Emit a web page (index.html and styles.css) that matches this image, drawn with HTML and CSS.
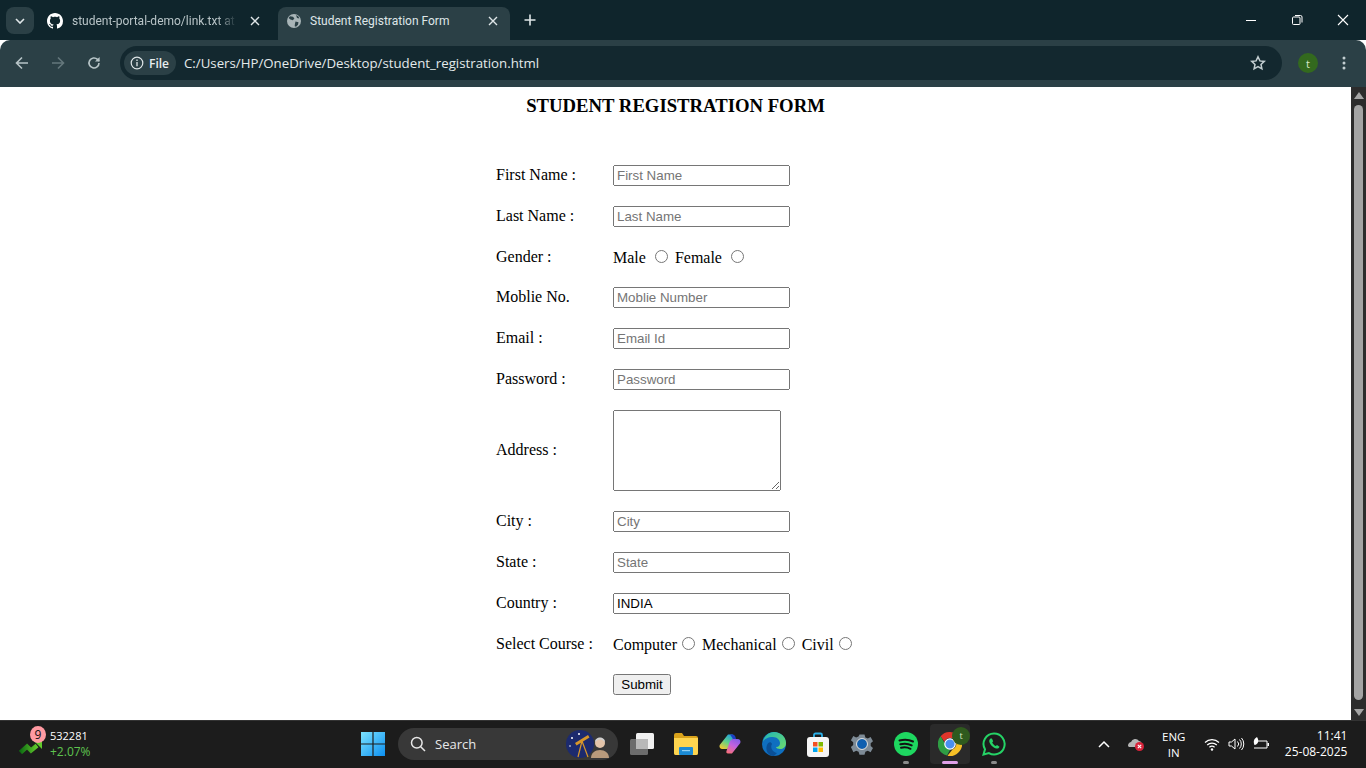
FILE: index.html
```html
<!DOCTYPE html>
<html lang="en">
  <head>
    <meta charset="UTF-8" />
    <title>Student Registration Form</title>
    <link rel="stylesheet" href="styles.css">
  </head>
  <body>
    <div class="tabstrip">
      <button class="tab-search" aria-label="Search tabs">
        <svg width="10" height="6" viewBox="0 0 10 6"><path d="M1 1l4 4 4-4" fill="none" stroke="#dfe6e8" stroke-width="1.6"/></svg>
      </button>
      <div class="tab">
        <svg class="tab-icon" width="16" height="16" viewBox="0 0 16 16"><path fill="#fff" d="M8 0C3.58 0 0 3.58 0 8c0 3.54 2.29 6.53 5.47 7.59.4.07.55-.17.55-.38 0-.19-.01-.82-.01-1.49-2.01.37-2.53-.49-2.69-.94-.09-.23-.48-.94-.82-1.13-.28-.15-.68-.52-.01-.53.63-.01 1.08.58 1.23.82.72 1.21 1.87.87 2.33.66.07-.52.28-.87.51-1.07-1.78-.2-3.64-.89-3.64-3.95 0-.87.31-1.59.82-2.15-.08-.2-.36-1.02.08-2.12 0 0 .67-.21 2.2.82.64-.18 1.32-.27 2-.27s1.36.09 2 .27c1.53-1.04 2.2-.82 2.2-.82.44 1.1.16 1.92.08 2.12.51.56.82 1.27.82 2.15 0 3.07-1.87 3.75-3.65 3.95.29.25.54.73.54 1.48 0 1.07-.01 1.93-.01 2.2 0 .21.15.46.55.38A8.01 8.01 0 0 0 16 8c0-4.42-3.58-8-8-8z"/></svg>
        <span class="tab-title tab-title-fade">student-portal-demo/link.txt at</span>
        <svg class="tab-close" width="10" height="10" viewBox="0 0 10 10"><path d="M1 1l8 8M9 1l-8 8" stroke="#dfe6e8" stroke-width="1.4"/></svg>
      </div>
      <div class="tab tab-active">
        <svg class="tab-icon" width="16" height="16" viewBox="0 0 16 16"><circle cx="8" cy="8" r="7" fill="#a9b5b8"/><path fill="#2b4046" d="M4 3.2l3 .6 1.4 1.6-1.6 1.8-2.3-.6L2.600 5zM9.500 8.400l3 .8-.5 2.600-2 2-1.300-.5.2-2.400zM10 2l2.500 1.500.8 2-2.300-.5z"/></svg>
        <span class="tab-title">Student Registration Form</span>
        <svg class="tab-close" width="10" height="10" viewBox="0 0 10 10"><path d="M1 1l8 8M9 1l-8 8" stroke="#dfe6e8" stroke-width="1.4"/></svg>
      </div>
      <svg class="new-tab" width="12" height="12" viewBox="0 0 12 12"><path d="M6 .5v11M.5 6h11" stroke="#dfe6e8" stroke-width="1.6"/></svg>
      <div class="window-btns">
        <svg width="12" height="12" viewBox="0 0 12 12"><path d="M1 6.500h10" stroke="#fff"/></svg>
        <svg width="12" height="12" viewBox="0 0 12 12"><rect x="1.500" y="3" width="7.500" height="7.500" rx="1" fill="none" stroke="#fff"/><path d="M4 1.500h5.500a1.500 1.500 0 0 1 1.500 1.500v5.500" fill="none" stroke="#fff"/></svg>
        <svg width="12" height="12" viewBox="0 0 12 12"><path d="M1 1l10 10M11 1L1 11" stroke="#fff" stroke-width="1.100"/></svg>
      </div>
    </div>

    <div class="toolbar">
      <svg class="nav-icon" width="14" height="14" viewBox="0 0 14 14"><path d="M13 7H2M7 1.500 1.500 7 7 12.500" fill="none" stroke="#b7c4c7" stroke-width="1.600"/></svg>
      <svg class="nav-icon" width="14" height="14" viewBox="0 0 14 14"><path d="M1 7h11M7 1.500 12.500 7 7 12.500" fill="none" stroke="#64777c" stroke-width="1.600"/></svg>
      <svg class="nav-icon" width="14" height="14" viewBox="0 0 14 14"><path d="M12 7a5 5 0 1 1-1.500-3.600L12 5" fill="none" stroke="#b7c4c7" stroke-width="1.600"/><path d="M12.600 1v4.600H8z" fill="#b7c4c7"/></svg>
      <div class="omnibox">
        <div class="site-chip">
          <svg width="14" height="14" viewBox="0 0 14 14"><circle cx="7" cy="7" r="5.800" fill="none" stroke="#dfe6e8" stroke-width="1.200"/><path d="M7 6v4.200M7 3.600v1.300" stroke="#dfe6e8" stroke-width="1.300"/></svg>
          <span>File</span>
        </div>
        <span class="url">C:/Users/HP/OneDrive/Desktop/student_registration.html</span>
        <svg class="star" width="16" height="16" viewBox="0 0 16 16"><path d="M8 1.800l1.900 4.100 4.400.5-3.300 3 .9 4.400L8 11.600l-3.900 2.200.9-4.400-3.300-3 4.400-.5z" fill="none" stroke="#c3ced1" stroke-width="1.500"/></svg>
      </div>
      <div class="avatar">t</div>
      <svg class="menu-dots" width="4" height="14" viewBox="0 0 4 14"><circle cx="2" cy="2" r="1.500" fill="#c3ced1"/><circle cx="2" cy="7" r="1.500" fill="#c3ced1"/><circle cx="2" cy="12" r="1.500" fill="#c3ced1"/></svg>
    </div>

    <div class="viewport">
      <main class="page">
        <h3 class="form-title">STUDENT REGISTRATION FORM</h3>
        <form class="reg-form">
          <label>First Name :</label>
          <input type="text" placeholder="First Name">
          <label>Last Name :</label>
          <input type="text" placeholder="Last Name">
          <label>Gender :</label>
          <div class="choices">Male <input type="radio" name="gender"> Female <input type="radio" name="gender"></div>
          <label>Moblie No.</label>
          <input type="text" placeholder="Moblie Number">
          <label>Email :</label>
          <input type="text" placeholder="Email Id">
          <label>Password :</label>
          <input type="password" placeholder="Password">
          <label>Address :</label>
          <textarea cols="20" rows="5"></textarea>
          <label>City :</label>
          <input type="text" placeholder="City">
          <label>State :</label>
          <input type="text" placeholder="State">
          <label>Country :</label>
          <input type="text" value="INDIA">
          <label>Select Course :</label>
          <div class="choices">Computer<input type="radio" name="course"> Mechanical<input type="radio" name="course"> Civil<input type="radio" name="course"></div>
          <span></span>
          <div><input type="submit" value="Submit"></div>
        </form>
      </main>
      <div class="scrollbar">
        <span class="arrow-up"></span>
        <span class="thumb"></span>
        <span class="arrow-down"></span>
      </div>
    </div>

    <div class="taskbar">
      <div class="stock">
        <div class="stock-icon">
          <svg width="24" height="14" viewBox="0 0 24 14"><defs><linearGradient id="stk" x1="0" y1="0" x2="1" y2="0"><stop offset="0" stop-color="#0f6e12"/><stop offset="1" stop-color="#62c92c"/></linearGradient></defs><path d="M1.500 12.500 8 6.500l4 4 6-5" fill="none" stroke="url(#stk)" stroke-width="4.500"/><path d="M15 1h8v8z" fill="#62c92c"/></svg>
          <span class="stock-badge">9</span>
        </div>
        <div class="stock-text">
          <span>532281</span>
          <span class="stock-up">+2.07%</span>
        </div>
      </div>

      <div class="task-app">
        <svg width="24" height="24" viewBox="0 0 24 24"><defs><linearGradient id="win" x1="0" y1="0" x2="1" y2="1"><stop offset="0" stop-color="#7ce3ff"/><stop offset="1" stop-color="#0c8ff0"/></linearGradient></defs><path fill="url(#win)" d="M0 0h11.400v11.400H0zM12.600 0H24v11.400H12.600zM0 12.600h11.400V24H0zM12.600 12.600H24V24H12.600z"/></svg>
      </div>
      <div class="task-search">
        <svg width="16" height="16" viewBox="0 0 16 16"><circle cx="6.800" cy="6.800" r="5.300" fill="none" stroke="#e8e8e8" stroke-width="1.500"/><path d="M10.700 10.700 15 15" stroke="#e8e8e8" stroke-width="1.500"/></svg>
        <span>Search</span>
        <svg class="search-art" width="46" height="28" viewBox="0 0 46 28"><circle cx="14" cy="14" r="14" fill="#1c2a6e"/><circle cx="6" cy="8" r="1" fill="#fff"/><circle cx="13" cy="4" r="1" fill="#fff"/><circle cx="4" cy="16" r=".8" fill="#fff"/><path d="M9 13l13-8 1.500 2.500-13 8z" fill="#d7962a"/><path d="M16 11l-4 16M16 11l6 16" stroke="#d7962a" stroke-width="1.200"/><path d="M25 28c0-5 4-8 9-8s9 3 9 8z" fill="#b89a7c"/><circle cx="34" cy="13" r="5" fill="#e3c4aa"/><path d="M29 12c0-6 10-6 10 0l-1.500-1c-2-2-5-2-7 0z" fill="#d0d0d0"/></svg>
      </div>

      <div class="task-app">
        <svg width="24" height="22" viewBox="0 0 24 22"><rect x="6" y="0" width="18" height="16" rx="1.500" fill="#f0f0f0"/><rect x="0" y="6" width="18" height="16" rx="1.500" fill="#6c6c6c"/><rect x="6" y="6" width="12" height="10" fill="#b8b8b8"/></svg>
      </div>
      <div class="task-app">
        <svg width="24" height="22" viewBox="0 0 24 22"><path d="M0 2a2 2 0 0 1 2-2h6l2 3h12a2 2 0 0 1 2 2v15a2 2 0 0 1-2 2H2a2 2 0 0 1-2-2z" fill="#d9a21b"/><path d="M0 5h24v15a2 2 0 0 1-2 2H2a2 2 0 0 1-2-2z" fill="#fdd44f"/><rect x="5" y="14" width="14" height="8" rx="1" fill="#1a8ad4"/><rect x="8" y="17" width="8" height="1.200" fill="#8fd0f5"/></svg>
      </div>
      <div class="task-app">
        <svg width="22" height="20" viewBox="0 0 22 20"><defs><linearGradient id="cop1" gradientUnits="userSpaceOnUse" x1="11" y1="0" x2="3" y2="15"><stop offset="0" stop-color="#1f9fe0"/><stop offset=".5" stop-color="#5fd08a"/><stop offset="1" stop-color="#f6c92e"/></linearGradient><linearGradient id="cop2" gradientUnits="userSpaceOnUse" x1="19" y1="4" x2="11" y2="20"><stop offset="0" stop-color="#7a5ce8"/><stop offset=".5" stop-color="#c262e0"/><stop offset="1" stop-color="#f9707a"/></linearGradient></defs><path d="M9 .5h4c1.500 0 2 1 1.500 2.500l-3 8.500c-.7 2-2 3.500-4 3.500H3.500C1 15 0 13 .7 11z" fill="url(#cop1)"/><path d="M13 19.500H9c-1.500 0-2-1-1.500-2.500l3-8.500c.7-2 2-3.500 4-3.500h4c2.500 0 3.500 2 2.800 4z" fill="url(#cop2)"/><path d="M11 .5h2.500c1.500 0 3 1 3.500 4.500h-3z" fill="#1d3fc4"/></svg>
      </div>
      <div class="task-app">
        <svg width="24" height="24" viewBox="0 0 24 24"><defs><linearGradient id="edge" x1="0" y1="0" x2="1" y2="1"><stop offset="0" stop-color="#1fb5b8"/><stop offset="1" stop-color="#6fdc6a"/></linearGradient></defs><circle cx="12" cy="12" r="12" fill="#0f6fc0"/><path d="M1 10C2 4 7 0 12 0c7 0 12 5 12 11 0 4-3 6-6 6-2 0-4-1-4-2 3 0 4-2 4-4 0-3-3-6-7-6-5 0-9 2-10 5z" fill="url(#edge)"/><path d="M10 12c-2 3 0 8 5 9l-3 3C6 24 3 18 5 13c1-3 4-4 5-1z" fill="#0a4f96"/></svg>
      </div>
      <div class="task-app">
        <svg width="24" height="25" viewBox="0 0 24 25"><path d="M8 6V3a1.500 1.500 0 0 1 1.500-1.500h5A1.500 1.500 0 0 1 16 3v3" fill="none" stroke="#2bb0e8" stroke-width="1.800"/><rect x="1" y="5" width="22" height="20" rx="3" fill="#f5f5f5"/><path fill="#f25022" d="M7 10h4.500v4.500H7z"/><path fill="#7fba00" d="M12.500 10H17v4.500h-4.500z"/><path fill="#00a4ef" d="M7 15.500h4.500V20H7z"/><path fill="#ffb900" d="M12.500 15.500H17V20h-4.500z"/></svg>
      </div>
      <div class="task-app">
        <svg width="24" height="24" viewBox="0 0 24 24"><path fill="#7e8b96" d="M9.500 1h5l.9 3 2.400 1 2.800-1.500 2.400 4.200-2.300 2.100v2.600l2.300 2.100-2.400 4.200-2.800-1.500-2.400 1-.9 3h-5l-.9-3-2.400-1-2.800 1.500L.9 13.500l2.300-2.100V8.800L.9 6.700l2.400-4.200 2.800 1.500 2.400-1z" transform="translate(0 1.500)"/><circle cx="12" cy="12" r="5" fill="#0f5fb0"/><circle cx="12" cy="12" r="5.500" fill="none" stroke="#d8dde2" stroke-width="1"/></svg>
      </div>
      <div class="task-app task-running">
        <svg width="24" height="24" viewBox="0 0 24 24"><circle cx="12" cy="12" r="12" fill="#1ed760"/><path d="M5.500 8.500c4.500-1.300 9.500-1 13.500 1M6.300 12.300c3.800-1 8-.7 11.400 1.100M7 15.800c3.200-.8 6.500-.6 9.500 1" fill="none" stroke="#121212" stroke-width="2" stroke-linecap="round"/></svg>
      </div>
      <div class="task-app task-active">
        <svg width="24" height="24" viewBox="0 0 24 24"><path d="M12 0a12 12 0 0 1 10.400 6H12a6 6 0 0 0-5.600 3.800L2.600 4.200A12 12 0 0 1 12 0z" fill="#e0352b"/><path d="M2.600 4.200 8 13.500a6 6 0 0 0 4 4.400L9 23.600A12 12 0 0 1 2.600 4.200z" fill="#2f9e44"/><path d="M22.400 6A12 12 0 0 1 9.500 23.800l5.200-6.500A6 6 0 0 0 17 8z" fill="#f6c026"/><circle cx="12" cy="12" r="5.200" fill="#4a8ff0" stroke="#fff" stroke-width="1.200"/></svg>
        <span class="chrome-badge">t</span>
      </div>
      <div class="task-app task-running">
        <svg width="24" height="24" viewBox="0 0 24 24"><path d="M12 1.500A10.500 10.500 0 0 0 3 17.300L1.500 22.500l5.400-1.400A10.500 10.500 0 1 0 12 1.500z" fill="none" stroke="#25d366" stroke-width="2"/><path d="M8.500 6.500c-1.500 1-1.700 3-.5 5 1.300 2.300 3.500 4.300 6 5 1.500.4 3-.3 3.500-1.800l-2.500-1.700-1.200 1c-1.500-.6-3-2-3.600-3.500l1-1.300-1.300-2.700z" fill="#25d366"/></svg>
      </div>

      <div class="tray">
        <svg width="12" height="8" viewBox="0 0 12 8"><path d="M1 7l5-5 5 5" fill="none" stroke="#fff" stroke-width="1.500"/></svg>
        <svg class="tray-cloud" width="18" height="14" viewBox="0 0 18 14"><path d="M1 9a4 4 0 0 1 3-4 4.500 4.500 0 0 1 8-1 3 3 0 0 1 2 5v1H2z" fill="#b5b5b5"/><circle cx="12.500" cy="9.500" r="4.500" fill="#d8233a"/><path d="M10.800 7.800l3.400 3.400M14.200 7.800l-3.400 3.400" stroke="#fff" stroke-width="1.100"/></svg>
        <div class="tray-lang"><span>ENG</span><span>IN</span></div>
        <div class="tray-status">
          <svg width="16" height="13" viewBox="0 0 16 13"><path d="M1 4.500a10 10 0 0 1 14 0M3.200 7a7 7 0 0 1 9.600 0M5.400 9.300a4 4 0 0 1 5.200 0" fill="none" stroke="#fff" stroke-width="1.200"/><circle cx="8" cy="11.500" r="1.200" fill="#fff"/></svg>
          <svg width="17" height="14" viewBox="0 0 17 14"><path d="M1 5h2.500L7 2v10L3.500 9H1z" fill="none" stroke="#fff"/><path d="M9.500 4.500a3.500 3.500 0 0 1 0 5M11.500 2.500a6.500 6.500 0 0 1 0 9M13.500 1a9 9 0 0 1 0 12" fill="none" stroke="#fff"/></svg>
          <svg width="17" height="14" viewBox="0 0 17 14"><path d="M4 4h10v7H1" fill="none" stroke="#fff"/><path d="M14.500 6h1.500v3h-1.500z" fill="#fff"/><path d="M4 0C1 1.500 0 4.500 1.500 8 5 7.500 6.500 4 4 0z" fill="#fff"/></svg>
        </div>
        <div class="tray-clock"><span>11:41</span><span>25-08-2025</span></div>
      </div>
    </div>
  </body>
</html>
```

FILE: styles.css
```css
* {
  box-sizing: border-box;
}

html,
body {
  margin: 0;
  height: 100%;
  overflow: hidden;
}

body {
  display: flex;
  flex-direction: column;
  width: 1366px;
  height: 768px;
  font-family: 'Liberation Serif', serif;
}

/* browser top */
.tabstrip {
  display: flex;
  align-items: flex-end;
  height: 40px;
  padding-left: 6px;
  background-color: #0f252c;
  color: #dfe6e8;
  font-family: Roboto, sans-serif;
  font-size: 12px;
}

.tab-search {
  display: flex;
  align-items: center;
  justify-content: center;
  width: 28px;
  height: 27px;
  margin-bottom: 6px;
  padding: 0;
  border: none;
  border-radius: 8px;
  background-color: #2b4046;
}

.tab {
  display: flex;
  align-items: center;
  width: 244px;
  height: 33px;
  padding: 0 18px 6px 13px;
}

.tab-active {
  width: 232px;
  padding: 0 12px 6px 8px;
  border-radius: 8px 8px 0 0;
  background-color: #2b4046;
}

.tab-icon {
  flex: none;
  margin-right: 8px;
}

.tab-title {
  flex: 1;
  overflow: hidden;
  white-space: nowrap;
}

.tab-title-fade {
  margin: 0 13px 0 1px;
  color: #b9c5c8;
  -webkit-mask-image: linear-gradient(to right, #000 88%, transparent);
  mask-image: linear-gradient(to right, #000 88%, transparent);
}

.new-tab {
  margin: 0 0 14px 14px;
}

.window-btns {
  display: flex;
  gap: 34px;
  margin: 0 17px 14px auto;
}

.toolbar {
  display: flex;
  align-items: center;
  height: 47px;
  padding: 0 20px 1px 15px;
  border-radius: 10px 10px 0 0;
  background-color: #2b4046;
}

.nav-icon {
  flex: none;
  margin-right: 22px;
}

.nav-icon + .omnibox {
  margin-left: -3px;
}

.omnibox {
  display: flex;
  align-items: center;
  flex: 1;
  height: 34px;
  padding: 0 16px 0 4px;
  border-radius: 17px;
  background-color: #13282f;
}

.site-chip {
  display: flex;
  align-items: center;
  gap: 5px;
  width: 52px;
  height: 24px;
  padding-left: 6px;
  border-radius: 12px;
  background-color: #2b4046;
  color: #e9eeef;
  font-family: 'Open Sans', sans-serif;
  font-size: 12px;
  font-weight: 600;
}

.url {
  margin-left: 8px;
  color: #e4eaeb;
  font-family: 'Open Sans', sans-serif;
  font-size: 13.250px;
}

.star {
  margin-left: auto;
}

.avatar {
  display: flex;
  align-items: center;
  justify-content: center;
  width: 20px;
  height: 20px;
  margin: 0 24px 0 16px;
  border-radius: 50%;
  background-color: #33691e;
  color: #d7e8c8;
  font-family: 'Open Sans', sans-serif;
  font-size: 11px;
}

/* page */
.viewport {
  display: flex;
  height: 633px;
  background-color: #fff;
}

.page {
  flex: 1;
  color: #000;
  font-size: 16px;
}

.form-title {
  margin: 8px 0 0;
  text-align: center;
  font-size: 18.720px;
  line-height: 21px;
}

.reg-form {
  display: grid;
  grid-template-columns: 117px auto;
  justify-content: start;
  align-items: center;
  row-gap: 20px;
  margin: 49px 0 0 496px;
}

.reg-form label {
  margin-bottom: 1px;
  line-height: 18px;
}

.reg-form input[type='text'],
.reg-form input[type='password'] {
  display: block;
  width: 177px;
  height: 21px;
}

.reg-form textarea {
  display: block;
  width: 168px;
  height: 81px;
}

.reg-form input[type='submit'] {
  display: block;
  width: 58px;
  height: 21px;
}

.choices {
  height: 20px;
  line-height: 20px;
  white-space: nowrap;
}

.scrollbar {
  display: flex;
  flex-direction: column;
  align-items: center;
  width: 15px;
  padding: 5px 0 4px;
  background-color: #2c2c2c;
}

.arrow-up,
.arrow-down {
  width: 0;
  height: 0;
  border-left: 5px solid transparent;
  border-right: 5px solid transparent;
}

.arrow-up {
  border-bottom: 7px solid #a4a4a4;
}

.arrow-down {
  border-top: 7px solid #a4a4a4;
}

.thumb {
  flex: 1;
  width: 9px;
  margin: 6px 0 9px;
  border-radius: 5px;
  background-color: #a4a4a4;
}

/* windows taskbar */
.taskbar {
  display: flex;
  align-items: center;
  height: 48px;
  padding-bottom: 1px;
  border-top: 1px solid #333;
  background-color: #1c1c1c;
  color: #fff;
  font-family: 'Open Sans', sans-serif;
  font-size: 12px;
}

.stock {
  display: flex;
  align-items: center;
  gap: 7px;
  width: 351px;
  padding-left: 19px;
}

.stock-icon {
  position: relative;
  width: 24px;
  height: 14px;
  margin-top: 6px;
}

.stock-badge {
  position: absolute;
  top: -14px;
  left: 11px;
  width: 16px;
  height: 17px;
  border-radius: 50%;
  background-color: #ff9aa2;
  color: #111;
  font-size: 12px;
  line-height: 17px;
  text-align: center;
}

.stock-text {
  display: flex;
  flex-direction: column;
  font-size: 11px;
  line-height: 16px;
}

.stock-up {
  color: #5fc44f;
  font-size: 12px;
}

.task-app {
  position: relative;
  display: flex;
  align-items: center;
  justify-content: center;
  width: 44px;
  height: 40px;
  flex: none;
}

.task-running::after,
.task-active::after {
  content: '';
  position: absolute;
  bottom: 0;
  left: 19px;
  width: 6px;
  height: 3px;
  border-radius: 2px;
  background-color: #8a8a8a;
}

.task-active {
  width: 40px;
  margin: 0 2px;
  border-radius: 4px;
  background-color: #2a2a2a;
}

.task-active::after {
  left: 12px;
  width: 16px;
  background-color: #e0a0e8;
}

.chrome-badge {
  position: absolute;
  top: 3px;
  right: 0;
  width: 18px;
  height: 18px;
  border-radius: 50%;
  background-color: #2f5a1e;
  color: #d7e8c8;
  font-size: 9px;
  line-height: 18px;
  text-align: center;
}

.task-search {
  display: flex;
  align-items: center;
  gap: 9px;
  width: 220px;
  height: 32px;
  margin: 0 2px 0 3px;
  padding: 0 6px 0 12px;
  border-radius: 16px;
  background-color: #383838;
  color: #e8e8e8;
  font-size: 13px;
}

.search-art {
  margin-left: auto;
}

.tray {
  display: flex;
  align-items: center;
  margin-left: 82px;
}

.tray-cloud {
  margin-left: 17px;
}

.tray-lang {
  display: flex;
  flex-direction: column;
  align-items: center;
  margin: 1px 0 0 17px;
  font-size: 11.500px;
  line-height: 16px;
}

.tray-status {
  display: flex;
  align-items: center;
  gap: 8px;
  margin-left: 19px;
}

.tray-clock {
  display: flex;
  flex-direction: column;
  align-items: flex-end;
  width: 72px;
  margin-left: 5px;
  font-size: 12px;
  line-height: 16px;
}
```
